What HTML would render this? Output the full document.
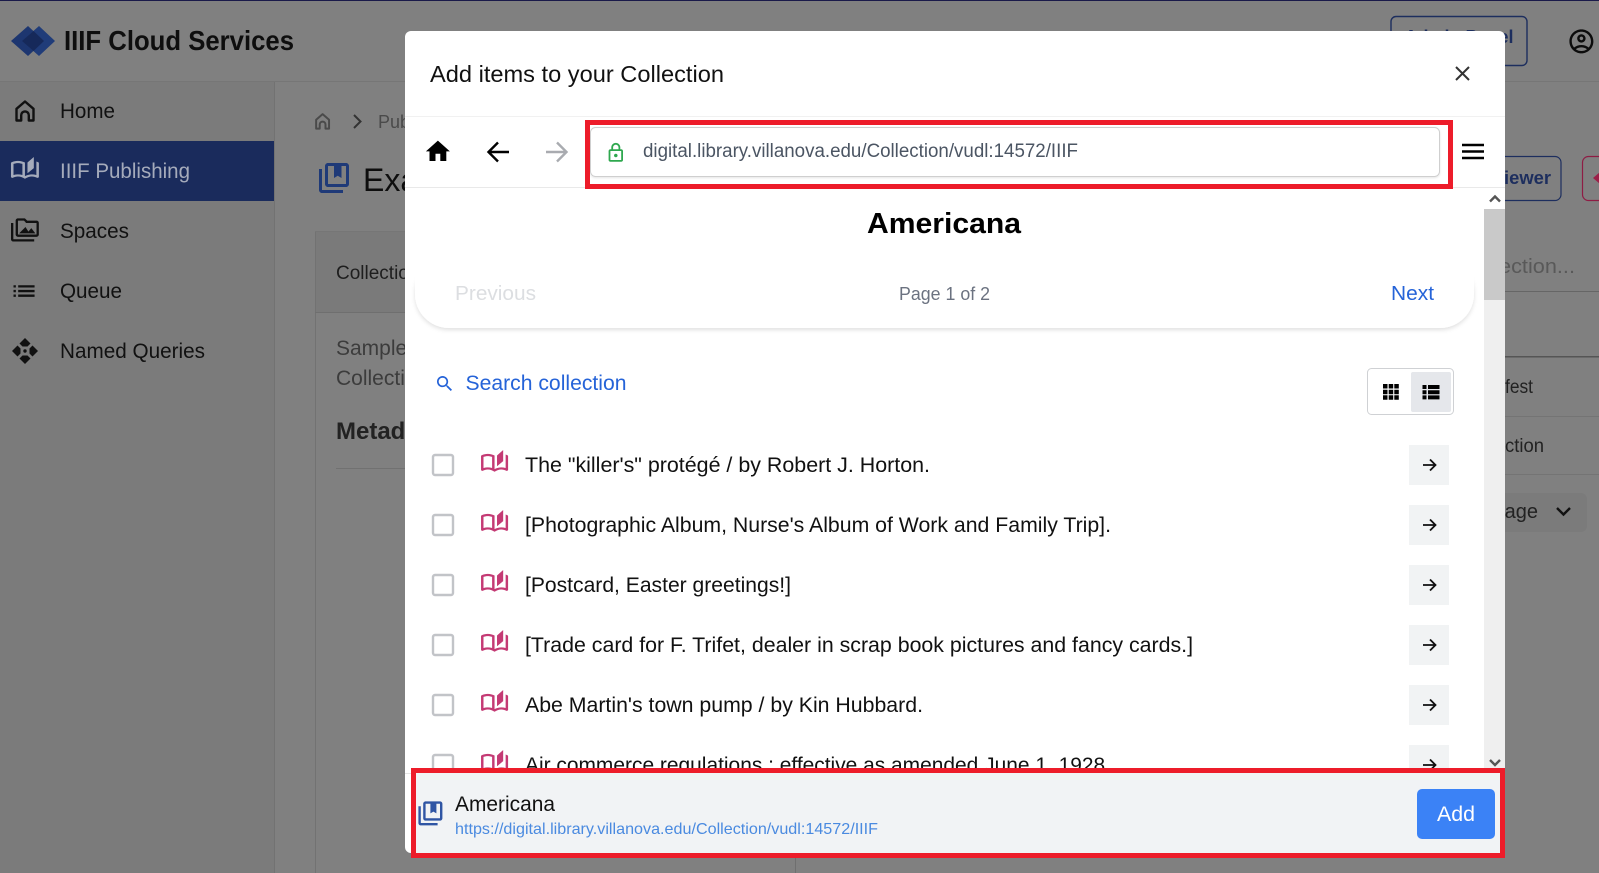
<!DOCTYPE html>
<html lang="en">
<head>
<meta charset="utf-8">
<title>Add items to your Collection</title>
<style>
html,body{margin:0;padding:0;background:#808080;width:1599px;height:873px;overflow:hidden}
svg{display:block}
text{font-family:"Liberation Sans",sans-serif;white-space:pre}
</style>
</head>
<body>
<svg xmlns="http://www.w3.org/2000/svg" width="1599" height="873" viewBox="0 0 1599 873">
<defs>
<filter id="sh" x="-5%" y="-20%" width="110%" height="150%"><feDropShadow dx="0" dy="2" stdDeviation="2" flood-color="#000" flood-opacity=".12"/></filter>
<filter id="sh2" x="-5%" y="-20%" width="110%" height="150%"><feDropShadow dx="0" dy="1" stdDeviation="1" flood-color="#000" flood-opacity=".1"/></filter>
<path id="bk" d="M22.47 5.2C22 4.96 21.51 4.76 21 4.59v12.03C19.86 16.21 18.69 16 17.5 16c-1.9 0-3.78.54-5.5 1.58V5.48C10.38 4.55 8.51 4 6.5 4 4.71 4 3.02 4.47 1.53 5.2 1.2 5.36 1 5.71 1 6.08v12.08c0 .76.82 1.23 1.53.9C3.74 18.49 5.08 18 6.5 18c1.97 0 3.77.78 5.5 2 1.73-1.22 3.53-2 5.5-2 1.42 0 2.76.49 3.97 1.06.71.33 1.53-.14 1.53-.9V6.08c0-.37-.2-.72-.53-.88zM10 16.62C8.86 16.21 7.69 16 6.5 16s-2.36.21-3.5.62V6.71C4.11 6.24 5.28 6 6.5 6c1.2 0 2.39.25 3.5.72v9.9zM19 .5l-5 5V15l5-4.5V.5z"/>
<path id="cb" d="M4 6H2v14c0 1.1.9 2 2 2h14v-2H4V6zm16-4H8c-1.1 0-2 .9-2 2v12c0 1.1.9 2 2 2h12c1.1 0 2-.9 2-2V4c0-1.1-.9-2-2-2zm0 14H8V4h4v8l2.5-1.5L17 12V4h3v12z"/>
<path id="hm" d="M1.5 20.500V8.800L10 1.500l8.500 7.300v11.700h-4.700v-5.300a3.800 3.800 0 0 0-7.600 0v5.300z" fill="none" stroke-linejoin="round"/>
<g id="row-arrow"><rect x="0" y="0" width="40" height="40" fill="#f1f3f4"/><path d="M14 20h12M21 14.5l5.500 5.500-5.500 5.500" fill="none" stroke="#111" stroke-width="1.800"/></g>
<rect id="chk" width="20" height="20" rx="2" fill="#fff" stroke="#c2c4c8" stroke-width="2.400"/>
</defs>

<!-- dimmed page -->
<rect width="1599" height="873" fill="#808080"/>
<rect width="1599" height="1" fill="#1a1a4a"/>
<rect y="81" width="1599" height="1" fill="#767676"/>
<rect y="82" width="274" height="791" fill="#7b7b7b"/>
<rect x="274" y="82" width="1" height="791" fill="#727272"/>
<rect x="315" y="231" width="1" height="642" fill="#727272"/>
<rect x="315" y="231" width="90" height="1" fill="#767676"/>
<rect x="316" y="232" width="89" height="80" fill="#7a7a7a"/>
<rect x="315" y="312" width="90" height="1" fill="#6f6f6f"/>
<rect x="795" y="853" width="1" height="20" fill="#6f6f6f"/>

<!-- logo -->
<polygon points="11,41 28,26 44,41 28,56" fill="#1d3670"/>
<polygon points="22,41 39,26 55,41 39,56" fill="#203c79"/>
<polygon points="22,41 33.5,31 44,41 33.5,51" fill="#16295a"/>
<text x="64" y="50" font-size="28" font-weight="700" fill="#0e0e0e" textLength="230" lengthAdjust="spacingAndGlyphs">IIIF Cloud Services</text>

<!-- sidebar -->
<rect y="141" width="274" height="60" fill="#1a2b5c"/>
<use href="#hm" transform="translate(15 100)" stroke="#111" stroke-width="2.400"/>
<text x="60" y="118" font-size="21" fill="#111" textLength="55" lengthAdjust="spacingAndGlyphs">Home</text>
<use href="#bk" transform="translate(9.700 156.400) scale(1.270 1.120)" fill="#a5abbb"/>
<text x="60" y="178" font-size="21" fill="#a5abbb" textLength="130" lengthAdjust="spacingAndGlyphs">IIIF Publishing</text>
<path transform="translate(11 216) scale(1.160)" fill="#111" d="M2 6H0v5h.01L0 20c0 1.1.9 2 2 2h18v-2H2V6zm5 9h14l-3.500-4.500-2.500 3.010L12.500 9.500 7 15zM22 4h-8l-2-2H6c-1.100 0-1.990.9-1.990 2L4 16c0 1.100.9 2 2 2h16c1.100 0 2-.9 2-2V6c0-1.100-.9-2-2-2zm0 12H6V4h5.170l1.170 1.170.59.83H22v10z"/>
<text x="60" y="238" font-size="21" fill="#111" textLength="69" lengthAdjust="spacingAndGlyphs">Spaces</text>
<path transform="translate(10 277) scale(1.170)" fill="#111" d="M3 13h2v-2H3v2zm0 4h2v-2H3v2zm0-8h2V7H3v2zm4 4h14v-2H7v2zm0 4h14v-2H7v2zM7 7v2h14V7H7z"/>
<text x="60" y="298" font-size="21" fill="#111" textLength="62" lengthAdjust="spacingAndGlyphs">Queue</text>
<g fill="#111">
<polygon points="25,338 30.500,343.500 27.500,346.500 22.500,346.500 19.500,343.500"/>
<polygon points="25,364 30.500,358.500 27.500,355.500 22.500,355.500 19.500,358.500"/>
<polygon points="12,351 17.500,345.500 20.500,348.500 20.500,353.500 17.500,356.500"/>
<polygon points="38,351 32.500,345.500 29.500,348.500 29.500,353.500 32.500,356.500"/>
<circle cx="25" cy="351" r="1.700"/>
</g>
<text x="60" y="358" font-size="21" fill="#111" textLength="145" lengthAdjust="spacingAndGlyphs">Named Queries</text>

<!-- main behind modal -->
<use href="#hm" transform="translate(315 113) scale(.76)" stroke="#4a4a4a" stroke-width="2.600"/>
<path d="M354 115l6.500 6.500-6.500 6.500" fill="none" stroke="#333" stroke-width="2"/>
<text x="378" y="128" font-size="18" fill="#4a4a4a">Publishing</text>
<use href="#cb" transform="translate(316 160) scale(1.500)" fill="#1f3a78"/>
<text x="363" y="191" font-size="32" fill="#0e0e0e">Example</text>
<text x="336" y="279" font-size="19" fill="#1e1e1e">Collection</text>
<text x="336" y="355" font-size="21" fill="#3c3c3c">Sample</text>
<text x="336" y="385" font-size="21" fill="#3c3c3c">Collection</text>
<text x="336" y="439" font-size="24" font-weight="700" fill="#222">Metadata</text>
<rect x="336" y="468" width="70" height="1" fill="#717171"/>

<!-- right side behind modal -->
<rect x="1391" y="16.500" width="136" height="49" rx="5" fill="none" stroke="#1d2e5e" stroke-width="1.400"/>
<text x="1459" y="43" font-size="18" font-weight="700" fill="#1d2e5e" text-anchor="middle">Admin Panel</text>
<path transform="translate(1567 27) scale(1.200)" fill="#0c0c0c" d="M12 2C6.480 2 2 6.480 2 12s4.480 10 10 10 10-4.480 10-10S17.520 2 12 2zM7.350 18.500C8.660 17.560 10.260 17 12 17s3.340.56 4.650 1.500c-1.310.94-2.910 1.500-4.650 1.500s-3.340-.56-4.650-1.500zm10.790-1.380C16.450 15.800 14.320 15 12 15s-4.450.8-6.140 2.120C4.700 15.730 4 13.950 4 12c0-4.420 3.580-8 8-8s8 3.580 8 8c0 1.950-.7 3.730-1.860 5.120zM12 6c-1.930 0-3.500 1.570-3.500 3.500S10.070 13 12 13s3.500-1.570 3.500-3.500S13.930 6 12 6zm0 5c-.83 0-1.500-.67-1.500-1.500S11.170 8 12 8s1.500.67 1.500 1.500S12.830 11 12 11z"/>
<rect x="1470" y="156.500" width="91" height="44" rx="6" fill="none" stroke="#1d2e5e" stroke-width="1.200"/>
<text x="1551" y="184" font-size="18" font-weight="700" fill="#1d2e5e" text-anchor="end" textLength="47" lengthAdjust="spacingAndGlyphs">iewer</text>
<rect x="1582.500" y="156.500" width="40" height="44" rx="6" fill="none" stroke="#8e1c44" stroke-width="1.200"/>
<polygon points="1593,178 1600,172 1600,184" fill="#9c1f48"/>
<text x="1575" y="273" font-size="20" fill="#595959" text-anchor="end" textLength="76" lengthAdjust="spacingAndGlyphs">ection...</text>
<rect x="1505" y="291" width="94" height="1" fill="#666"/>
<rect x="1505" y="356" width="94" height="1.500" fill="#555"/>
<text x="1505" y="393" font-size="19" fill="#222" textLength="28" lengthAdjust="spacingAndGlyphs">fest</text>
<rect x="1505" y="416" width="94" height="1" fill="#747474"/>
<text x="1505" y="452" font-size="19" fill="#222" textLength="39" lengthAdjust="spacingAndGlyphs">ction</text>
<rect x="1505" y="474" width="94" height="1" fill="#747474"/>
<rect x="1490" y="493" width="97" height="39" rx="6" fill="#7b7b7b"/>
<text x="1538" y="518" font-size="20" fill="#222" text-anchor="end">page</text>
<path d="M1557 508l6.500 6.500 6.500-6.500" fill="none" stroke="#111" stroke-width="2.400"/>

<!-- modal -->
<rect x="405" y="31" width="1100" height="822" rx="6" fill="#fff"/>
<text x="430" y="82" font-size="23" fill="#111" textLength="294" lengthAdjust="spacingAndGlyphs">Add items to your Collection</text>
<path d="M1456 67l13 13M1469 67l-13 13" fill="none" stroke="#333" stroke-width="2"/>
<rect x="405" y="116" width="1100" height="1" fill="#f1f1f1"/>

<!-- toolbar -->
<rect x="405" y="187" width="1100" height="1" fill="#e9e9e9"/>
<path transform="translate(423.500 137) scale(1.200)" fill="#000" d="M10 20v-6h4v6h5v-8h3L12 3 2 12h3v8z"/>
<path d="M509 152h-19.500M498 142.500l-9.500 9.500 9.500 9.500" fill="none" stroke="#000" stroke-width="2.400"/>
<path d="M546 152h19.500M557 142.500l9.500 9.500-9.500 9.500" fill="none" stroke="#a9abb0" stroke-width="2.400"/>
<rect x="590.500" y="127.500" width="849" height="49" rx="5" fill="#fff" stroke="#cfcfcf" stroke-width="1" filter="url(#sh2)"/>
<path transform="translate(605 142) scale(.9)" fill="#2fa84f" d="M18 8h-1V6c0-2.760-2.240-5-5-5S7 3.240 7 6v2H6c-1.100 0-2 .9-2 2v10c0 1.100.9 2 2 2h12c1.100 0 2-.9 2-2V10c0-1.100-.9-2-2-2zM9 6c0-1.660 1.340-3 3-3s3 1.340 3 3v2H9V6zm9 14H6V10h12v10zm-6-3c1.100 0 2-.9 2-2s-.9-2-2-2-2 .9-2 2 .9 2 2 2z"/>
<text x="643" y="157" font-size="19" fill="#4b5563" textLength="435" lengthAdjust="spacingAndGlyphs">digital.library.villanova.edu/Collection/vudl:14572/IIIF</text>
<rect x="587.500" y="122.500" width="863" height="64" fill="none" stroke="#ed1c2a" stroke-width="5"/>
<path d="M1462 145h22M1462 151.500h22M1462 158h22" fill="none" stroke="#000" stroke-width="2.400"/>

<!-- scrollbar -->
<rect x="1484" y="188" width="21" height="585" fill="#efefef"/>
<rect x="1484" y="188" width="21" height="21" fill="#fff"/>
<rect x="1484" y="209" width="21" height="91" fill="#c9c9c9"/>
<path d="M1490 201.500l5-5 5 5" fill="none" stroke="#555" stroke-width="2.400"/>
<path d="M1490 760l5 5 5-5" fill="none" stroke="#555" stroke-width="2.400"/>

<!-- list head -->
<text x="944" y="233" font-size="29" font-weight="700" fill="#000" text-anchor="middle" textLength="154" lengthAdjust="spacingAndGlyphs">Americana</text>
<rect x="415" y="258" width="1059" height="70" rx="34" fill="#fff" filter="url(#sh)"/>
<rect x="415" y="250" width="1059" height="40" fill="#fff"/>
<text x="455" y="300" font-size="20" fill="#dcdee1" textLength="81" lengthAdjust="spacingAndGlyphs">Previous</text>
<text x="899" y="300" font-size="18" fill="#6b7280" textLength="91" lengthAdjust="spacingAndGlyphs">Page 1 of 2</text>
<text x="1391" y="300" font-size="20" fill="#2563d8" textLength="43" lengthAdjust="spacingAndGlyphs">Next</text>
<path transform="translate(434.400 373.400) scale(.86)" fill="#2563d8" d="M15.500 14h-.79l-.28-.27C15.410 12.590 16 11.110 16 9.500 16 5.910 13.090 3 9.500 3S3 5.910 3 9.500 5.910 16 9.500 16c1.610 0 3.090-.59 4.230-1.570l.27.28v.79l5 4.990L20.490 19l-4.990-5zm-6 0C7.010 14 5 11.990 5 9.500S7.010 5 9.500 5 14 7.010 14 9.500 11.990 14 9.500 14z"/>
<text x="465.500" y="390" font-size="21" fill="#2563d8" textLength="161" lengthAdjust="spacingAndGlyphs">Search collection</text>
<rect x="1367.500" y="368.500" width="86" height="46" rx="4" fill="#fff" stroke="#cfd1d4" stroke-width="1"/>
<rect x="1411" y="372" width="40" height="40" rx="2" fill="#e5e7eb"/>
<g fill="#000">
<path d="M1383 384h4.500v4.500h-4.500zM1388.700 384h4.500v4.500h-4.500zM1394.300 384h4.500v4.500h-4.500zM1383 389.700h4.500v4.500h-4.500zM1388.700 389.700h4.500v4.500h-4.500zM1394.300 389.700h4.500v4.500h-4.500zM1383 395.300h4.500v4.500h-4.500zM1388.700 395.300h4.500v4.500h-4.500zM1394.300 395.300h4.500v4.500h-4.500z"/>
<path d="M1422.500 385h4v4h-4zM1428 385h11.500v4H1428zM1422.500 390.200h4v4h-4zM1428 390.200h11.500v4H1428zM1422.500 395.400h4v4h-4zM1428 395.400h11.500v4H1428z"/>
</g>

<!-- rows -->
<g>
<use href="#chk" x="433" y="455"/><use href="#bk" transform="translate(479.800 449.400) scale(1.230 1.120)" fill="#c43a74"/>
<text x="525" y="472" font-size="21" fill="#111" textLength="405" lengthAdjust="spacingAndGlyphs">The "killer's" protégé / by Robert J. Horton.</text>
<use href="#row-arrow" x="1409" y="445"/>
<use href="#chk" x="433" y="515"/><use href="#bk" transform="translate(479.800 509.400) scale(1.230 1.120)" fill="#c43a74"/>
<text x="525" y="532" font-size="21" fill="#111" textLength="586" lengthAdjust="spacingAndGlyphs">[Photographic Album, Nurse's Album of Work and Family Trip].</text>
<use href="#row-arrow" x="1409" y="505"/>
<use href="#chk" x="433" y="575"/><use href="#bk" transform="translate(479.800 569.400) scale(1.230 1.120)" fill="#c43a74"/>
<text x="525" y="592" font-size="21" fill="#111" textLength="266" lengthAdjust="spacingAndGlyphs">[Postcard, Easter greetings!]</text>
<use href="#row-arrow" x="1409" y="565"/>
<use href="#chk" x="433" y="635"/><use href="#bk" transform="translate(479.800 629.400) scale(1.230 1.120)" fill="#c43a74"/>
<text x="525" y="652" font-size="21" fill="#111" textLength="668" lengthAdjust="spacingAndGlyphs">[Trade card for F. Trifet, dealer in scrap book pictures and fancy cards.]</text>
<use href="#row-arrow" x="1409" y="625"/>
<use href="#chk" x="433" y="695"/><use href="#bk" transform="translate(479.800 689.400) scale(1.230 1.120)" fill="#c43a74"/>
<text x="525" y="712" font-size="21" fill="#111" textLength="398" lengthAdjust="spacingAndGlyphs">Abe Martin's town pump / by Kin Hubbard.</text>
<use href="#row-arrow" x="1409" y="685"/>
<use href="#chk" x="433" y="755"/><use href="#bk" transform="translate(479.800 749.400) scale(1.230 1.120)" fill="#c43a74"/>
<text x="525" y="772" font-size="21" fill="#111" textLength="586" lengthAdjust="spacingAndGlyphs">Air commerce regulations : effective as amended June 1, 1928.</text>
<use href="#row-arrow" x="1409" y="745"/>
</g>

<!-- footer -->
<rect x="405" y="768" width="1100" height="5" fill="#fff"/>
<rect x="405" y="773" width="7" height="1" fill="#e5e5e5"/>
<rect x="411" y="768" width="1094" height="90" fill="#ed1c2a"/>
<rect x="416" y="773" width="1084" height="80" fill="#f1f3f5"/>
<use href="#cb" transform="translate(416 799) scale(1.200)" fill="#2f55a4"/>
<text x="455" y="811" font-size="21" fill="#111" textLength="100" lengthAdjust="spacingAndGlyphs">Americana</text>
<text x="455" y="834" font-size="16" fill="#4a8ae0" textLength="423" lengthAdjust="spacingAndGlyphs">https://digital.library.villanova.edu/Collection/vudl:14572/IIIF</text>
<rect x="1417" y="789" width="78" height="50" rx="5" fill="#3b82f6"/>
<text x="1456" y="821" font-size="21" fill="#fff" text-anchor="middle" textLength="38" lengthAdjust="spacingAndGlyphs">Add</text>
</svg>
</body>
</html>
